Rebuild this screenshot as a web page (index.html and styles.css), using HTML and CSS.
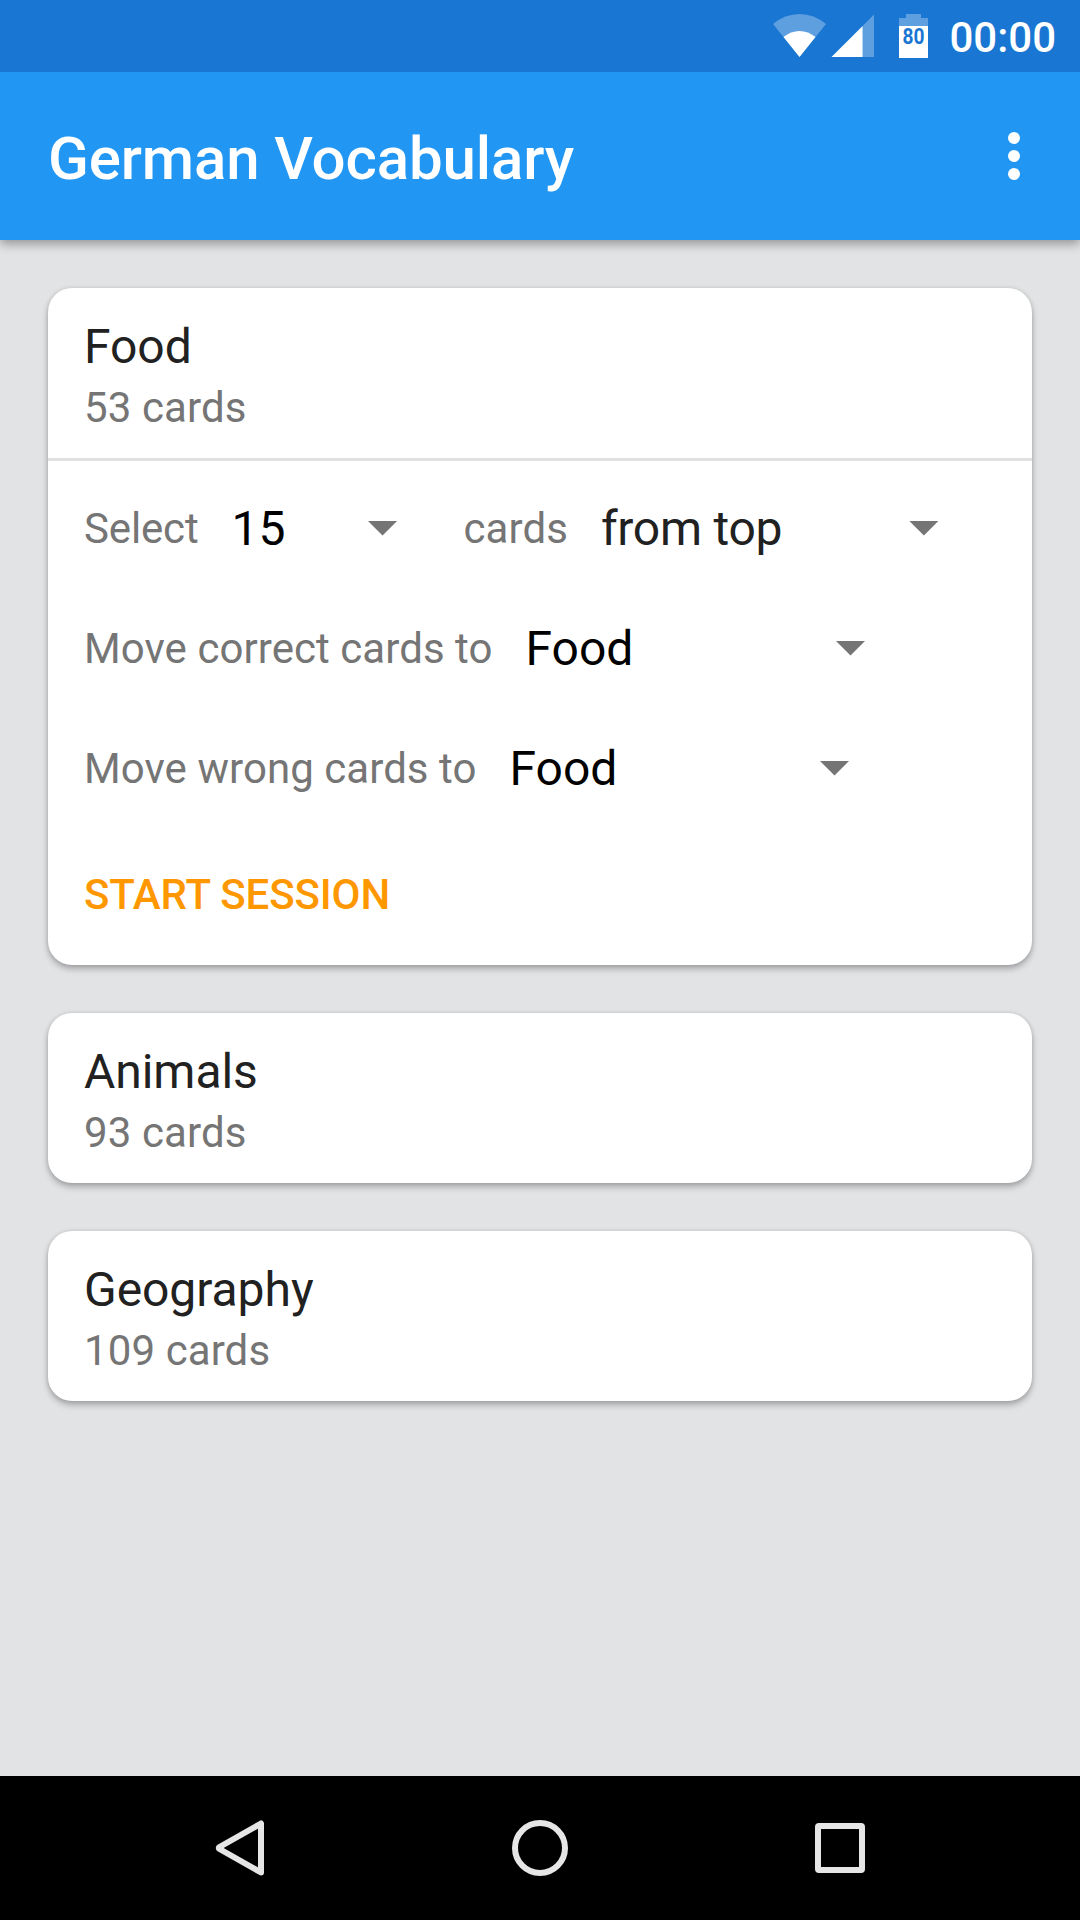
FILE: index.html
```html
<!DOCTYPE html>
<html lang="en">
<head>
<meta charset="utf-8">
<title>German Vocabulary</title>
<link rel="stylesheet" href="styles.css">
</head>
<body>
<div class="screen">
  <div class="status-bar">
    <svg class="status-icons" width="156" height="72" viewBox="773 0 156 72">
      <path class="dim" d="M799.5 57 773 24Q785 14 799.5 14T826 24Z"/>
      <path class="lit" d="M799.5 57 783.5 37Q791 31 799.5 31T815.5 37Z"/>
      <path class="dim" d="M862.6 57V26L874 14.5V57Z"/>
      <path class="lit" d="M831.5 57 862.6 26V57Z"/>
      <path class="dim" d="M899 26V18H906V14H921V18H928V26Z"/>
      <path class="lit" d="M899 26H928V58H899Z"/>
      <text class="battery-level" x="902.5" y="44" textLength="22" lengthAdjust="spacingAndGlyphs">80</text>
    </svg>
    <span class="clock">00:00</span>
  </div>
  <header class="toolbar">
    <h1 class="title">German Vocabulary</h1>
    <svg class="overflow" width="12" height="48" viewBox="0 0 12 48">
      <circle cx="6" cy="6" r="6"/><circle cx="6" cy="24" r="6"/><circle cx="6" cy="42" r="6"/>
    </svg>
  </header>
  <main class="decks">
    <section class="card">
      <div class="card-head">
        <h2 class="name">Food</h2>
        <p class="count">53 cards</p>
      </div>
      <div class="options">
        <div class="row">
          <span class="label label-select">Select</span>
          <span class="spinner spinner-number">15<i class="arrow"></i></span>
          <span class="label label-next">cards</span>
          <span class="spinner spinner-order">from top<i class="arrow"></i></span>
        </div>
        <div class="row">
          <span class="label">Move correct cards to</span>
          <span class="spinner">Food<i class="arrow"></i></span>
        </div>
        <div class="row">
          <span class="label">Move wrong cards to</span>
          <span class="spinner">Food<i class="arrow"></i></span>
        </div>
        <button class="start">START SESSION</button>
      </div>
    </section>
    <section class="card">
      <div class="card-head">
        <h2 class="name">Animals</h2>
        <p class="count">93 cards</p>
      </div>
    </section>
    <section class="card">
      <div class="card-head">
        <h2 class="name">Geography</h2>
        <p class="count">109 cards</p>
      </div>
    </section>
  </main>
  <nav class="nav-bar">
    <svg width="56" height="62" viewBox="212 1817 56 62"><path d="M261 1823.5V1872.5L219.5 1849Q218 1848 219.5 1847Z"/></svg>
    <svg width="56" height="62" viewBox="512 1817 56 62"><circle cx="540" cy="1848" r="25"/></svg>
    <svg width="56" height="62" viewBox="812 1817 56 62"><rect x="818" y="1826" width="44" height="44" rx="1"/></svg>
  </nav>
</div>
</body>
</html>
```

FILE: styles.css
```css
* {
  box-sizing: border-box;
  margin: 0;
  padding: 0;
}

body {
  background: #e2e3e5;
  font-family: Roboto, "Liberation Sans", sans-serif;
  font-size: 42px;
  line-height: 49px;
  color: #757575;
}

.screen {
  display: flex;
  flex-direction: column;
  width: 1080px;
  height: 1920px;
  overflow: hidden;
}

.status-bar {
  position: relative;
  z-index: 1;
  display: flex;
  align-items: center;
  justify-content: flex-end;
  gap: 20px;
  height: 72px;
  padding-right: 24px;
  background: #1976d2;
}

.dim {
  fill: #5e9fe0;
}

.lit {
  fill: #fff;
}

.battery-level {
  fill: #1976d2;
  font-size: 22.5px;
  font-weight: 700;
}

.clock {
  padding-top: 2px;
  font-weight: 500;
  color: #fff;
}

.toolbar {
  display: flex;
  align-items: center;
  justify-content: space-between;
  height: 168px;
  padding: 0 60px 0 48px;
  background: #2196f3;
  box-shadow: 0 4px 10px rgba(0, 0, 0, 0.35);
}

.title {
  padding-top: 5px;
  font-size: 60px;
  font-weight: 500;
  line-height: 70px;
  letter-spacing: -0.12px;
  color: #fff;
}

.overflow {
  fill: #fff;
}

.decks {
  display: flex;
  flex: 1;
  flex-direction: column;
  gap: 48px;
  padding: 48px;
}

.card {
  border-radius: 24px;
  background: #fff;
  box-shadow: 0 4px 6px rgba(0, 0, 0, 0.26), 0 0 4px rgba(0, 0, 0, 0.12);
}

.card-head {
  display: flex;
  flex-direction: column;
  gap: 8px;
  height: 170px;
  padding: 31px 36px 0;
}

.name {
  font-size: 48px;
  font-weight: 400;
  line-height: 56px;
  letter-spacing: -0.05px;
  color: #212121;
}

.count {
  letter-spacing: 0.1px;
}

.options {
  height: 507px;
  padding: 7px 36px 0;
  border-top: 3px solid #e0e0e0;
}

.row {
  display: flex;
  align-items: center;
  height: 120px;
}

.label {
  letter-spacing: 0.06px;
}

.label-select {
  letter-spacing: -0.15px;
}

.spinner {
  display: flex;
  align-items: center;
  justify-content: space-between;
  width: 340px;
  margin-left: 33px;
  padding-top: 2px;
  font-size: 48px;
  line-height: 56px;
  color: #000;
}

.spinner-number {
  width: 166px;
}

.spinner-order {
  width: 338px;
  letter-spacing: -0.25px;
  color: #212121;
}

.label-next {
  margin-left: 66px;
}

.arrow {
  width: 30px;
  height: 15px;
  margin-bottom: 2px;
  background: #757575;
  clip-path: polygon(0 0, 100% 0, 50% 100%);
}

.start {
  display: block;
  height: 49px;
  margin-top: 42px;
  border: 0;
  background: none;
  font: 500 42px/49px Roboto, "Liberation Sans", sans-serif;
  letter-spacing: -0.12px;
  color: #ff9800;
}

.nav-bar {
  display: flex;
  align-items: center;
  justify-content: space-between;
  height: 144px;
  padding: 0 212px;
  background: #000;
  fill: none;
  stroke: #e6e6e6;
  stroke-width: 6;
  stroke-linejoin: round;
}
```
